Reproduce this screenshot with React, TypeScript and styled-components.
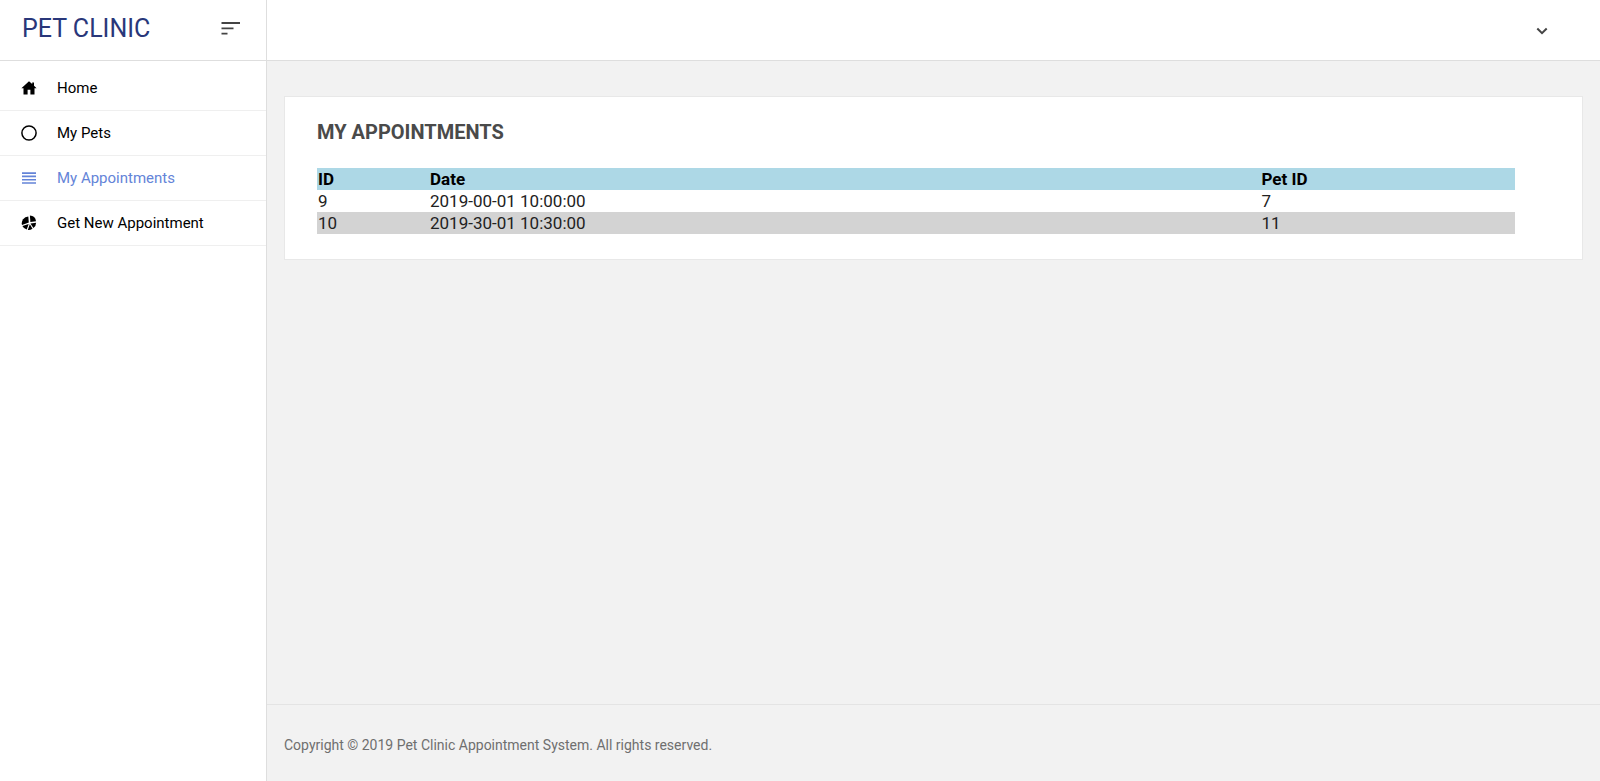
import React from "react";
import styled, { createGlobalStyle } from "styled-components";

const GlobalStyle = createGlobalStyle`
  *, *::before, *::after { box-sizing: border-box; }
  body {
    margin: 0;
    background: #f2f2f2;
    color: #000;
    font-family: Roboto, "Liberation Sans", sans-serif;
    font-size: 17px;
    line-height: 20px;
  }
`;

const Page = styled.div`
  display: grid;
  grid-template-columns: 267px minmax(0, 1fr);
  min-height: 100vh;
`;

const Sidebar = styled.aside`
  background: #fff;
  border-right: 1px solid #dedede;
`;

const Bar = styled.header`
  display: flex;
  align-items: center;
  justify-content: space-between;
  height: 61px;
  border-bottom: 1px solid #dedede;
  background: #fff;
`;

const BrandBar = styled(Bar)`
  padding: 0 24px 2px 22px;
`;

const TopBar = styled(Bar)`
  justify-content: flex-end;
  padding: 2px 50px 0 0;
`;

const Brand = styled.a`
  color: #29377a;
  font-size: 25px;
  font-weight: 400;
  line-height: 32px;
  text-decoration: none;
`;

const IconButton = styled.button`
  display: flex;
  padding: 2px;
  border: 0;
  background: none;
  color: #444;
  cursor: pointer;
`;

const Menu = styled.ul`
  margin: 0;
  padding: 5px 0 0;
  list-style: none;
`;

const MenuItem = styled.li`
  border-bottom: 1px solid #efefef;
`;

const MenuLink = styled.a<{ $active?: boolean }>`
  display: flex;
  align-items: center;
  gap: 20px;
  height: 44px;
  padding: 0 21px;
  color: ${(p) => (p.$active ? "#6484d8" : "#000")};
  font-size: 15px;
  text-decoration: none;
`;

const Content = styled.div`
  display: flex;
  flex-direction: column;
`;

const Main = styled.main`
  flex: 1;
  padding: 35px 17px;
`;

const Card = styled.section`
  padding: 23px 67px 25px 32px;
  border: 1px solid #e8e8e8;
  background: #fff;
`;

const Title = styled.h1`
  margin: 0 0 24px;
  color: #4a4a4a;
  font-size: 20px;
  font-weight: 700;
  line-height: 24px;
`;

const Table = styled.table`
  width: 100%;
  border-collapse: collapse;
  table-layout: fixed;
`;

const IdCol = styled.col`
  width: 9.35%;
`;

const DateCol = styled.col`
  width: 69.4%;
`;

const Row = styled.tr<{ $tone?: string }>`
  background: ${(p) => p.$tone || "transparent"};
`;

const Th = styled.th`
  padding: 1px;
  text-align: left;
  font-weight: 700;
`;

const Td = styled.td`
  padding: 1px;
  color: #222;
`;

const Footer = styled.footer`
  padding: 30px 17px 26px;
  border-top: 1px solid #e4e4e4;
  color: #6f6f6f;
  font-size: 14px;
`;

const HomeIcon = () => (
  <svg width="16" height="16" viewBox="0 0 16 16" fill="currentColor" aria-hidden="true">
    <path d="M8 1.2 0.4 8.2h2.1v6.3h4.1V9.8h2.8v4.7h4.1V8.2h2.1L13 5.8V2.4h-1.8v1.7z" />
  </svg>
);

const CircleIcon = () => (
  <svg width="16" height="16" viewBox="0 0 16 16" fill="none" stroke="currentColor" strokeWidth="1.5" aria-hidden="true">
    <circle cx="8" cy="8" r="7.1" />
  </svg>
);

const LinesIcon = () => (
  <svg width="16" height="16" viewBox="0 0 16 16" fill="currentColor" aria-hidden="true">
    <path d="M1 2.3h14v1.6H1zM1 5.6h14v1.6H1zM1 8.9h14v1.6H1zM1 12.2h14v1.6H1z" />
  </svg>
);

const PieIcon = () => (
  <svg width="16" height="16" viewBox="0 0 16 16" fill="currentColor" aria-hidden="true">
    <path d="M8.900 .5A6.500 6.500 0 0 1 15 6.200L9.400 7z" />
    <path d="M7.300 1.600 7.800 7.600 1 10A6.700 6.700 0 0 1 7.300 1.600z" />
    <path d="M15.100 7.700A6.800 6.800 0 0 1 12.400 13.100L9.500 8.500z" />
    <path d="M1.400 11.100 7.700 8.900 5.700 14.600A6.700 6.700 0 0 1 1.400 11.100z" />
    <path d="M8.800 9.300 11.500 13.700A6.700 6.700 0 0 1 6.800 15z" />
  </svg>
);

const items = [
  { label: "Home", Icon: HomeIcon },
  { label: "My Pets", Icon: CircleIcon },
  { label: "My Appointments", Icon: LinesIcon, active: true },
  { label: "Get New Appointment", Icon: PieIcon },
];

const appointments = [
  { id: 9, date: "2019-00-01 10:00:00", pet: 7 },
  { id: 10, date: "2019-30-01 10:30:00", pet: 11 },
];

export default function App() {
  return (
    <Page>
      <GlobalStyle />
      <Sidebar>
        <BrandBar as="div">
          <Brand href="#">PET CLINIC</Brand>
          <IconButton type="button" aria-label="Toggle menu">
            <svg width="20" height="16" viewBox="0 0 20 16" fill="currentColor" aria-hidden="true">
              <path d="M1.500 1h18.500v2h-18.500zM1.500 6.500h12v1.800h-12zM1.500 11.800h6v1.800h-6z" />
            </svg>
          </IconButton>
        </BrandBar>
        <nav>
          <Menu>
            {items.map(({ label, Icon, active }) => (
              <MenuItem key={label}>
                <MenuLink href="#" $active={active} aria-current={active ? "page" : undefined}>
                  <Icon />
                  {label}
                </MenuLink>
              </MenuItem>
            ))}
          </Menu>
        </nav>
      </Sidebar>
      <Content>
        <TopBar>
          <IconButton type="button" aria-label="Account menu">
            <svg width="12" height="12" viewBox="0 0 12 12" fill="none" stroke="currentColor" strokeWidth="2" aria-hidden="true">
              <path d="M1.300 3.500 6 8.200 10.700 3.500" />
            </svg>
          </IconButton>
        </TopBar>
        <Main>
          <Card>
            <Title>MY APPOINTMENTS</Title>
            <Table>
              <colgroup>
                <IdCol />
                <DateCol />
                <col />
              </colgroup>
              <thead>
                <Row $tone="#add8e6">
                  <Th scope="col">ID</Th>
                  <Th scope="col">Date</Th>
                  <Th scope="col">Pet ID</Th>
                </Row>
              </thead>
              <tbody>
                {appointments.map((a, i) => (
                  <Row key={a.id} $tone={i % 2 ? "#d3d3d3" : undefined}>
                    <Td>{a.id}</Td>
                    <Td>{a.date}</Td>
                    <Td>{a.pet}</Td>
                  </Row>
                ))}
              </tbody>
            </Table>
          </Card>
        </Main>
        <Footer>Copyright © 2019 Pet Clinic Appointment System. All rights reserved.</Footer>
      </Content>
    </Page>
  );
}
